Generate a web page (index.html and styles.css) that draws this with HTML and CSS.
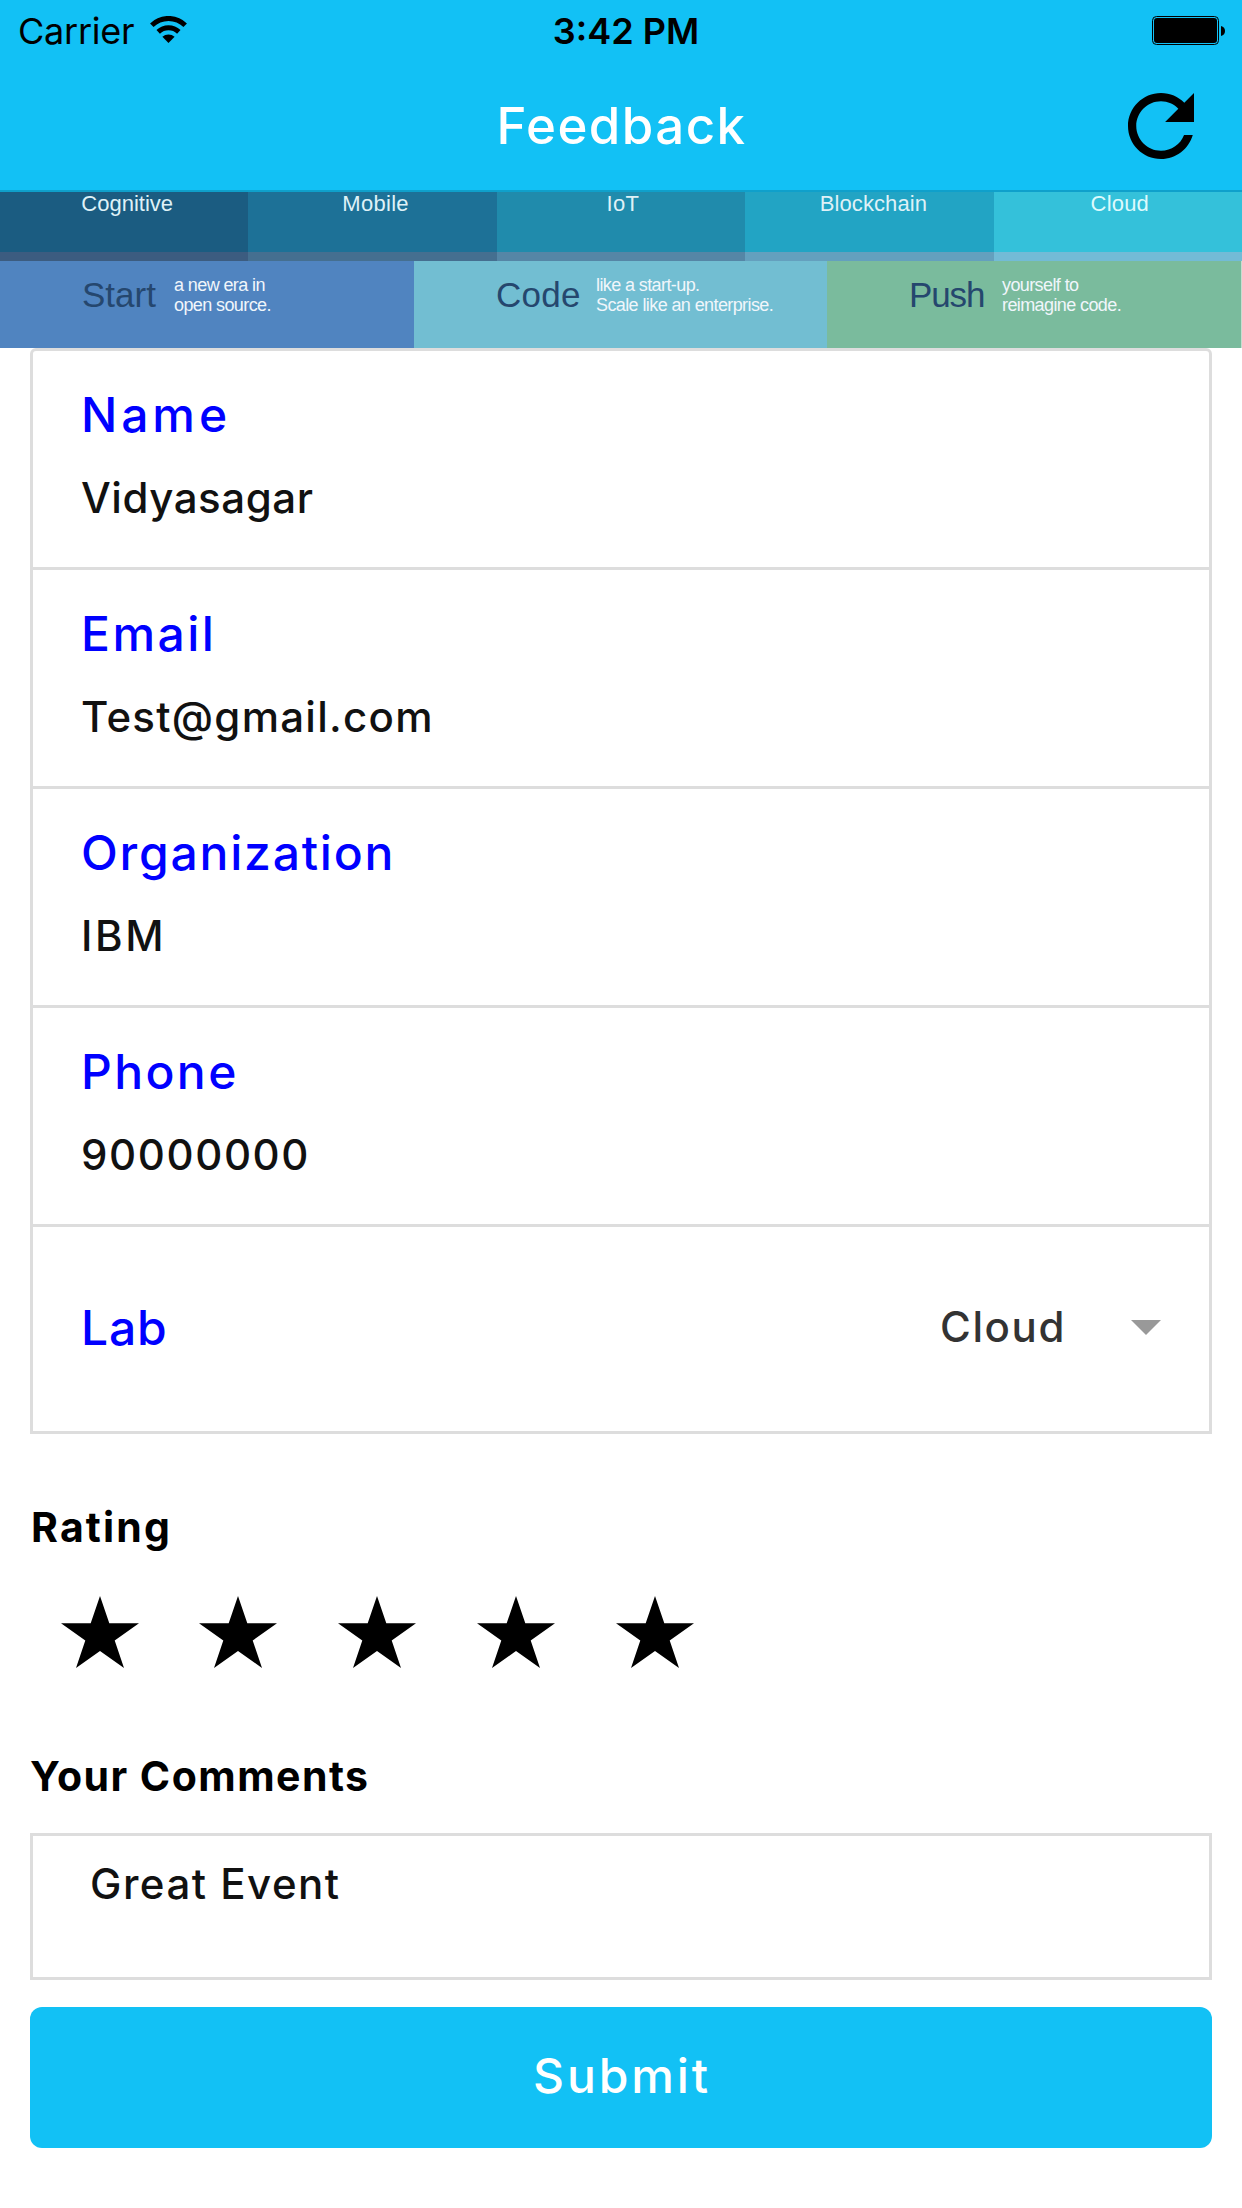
FILE: index.html
```html
<!DOCTYPE html>
<html lang="en">
<head>
<meta charset="utf-8">
<title>Feedback</title>
<link rel="stylesheet" href="styles.css">
</head>
<body>
<header class="header">
  <div class="status">
    <div class="carrier">
      <span class="carrier-name">Carrier</span>
      <svg class="wifi" viewBox="0 0 37 28" width="37" height="28">
        <path fill="none" stroke="#000" stroke-width="5" d="M1.8 9.2a24 24 0 0 1 33.4 0M8.2 15.9a15 15 0 0 1 20.6 0"/>
        <path d="M12.4 20.8a9 9 0 0 1 12.2 0L18.5 27z"/>
      </svg>
    </div>
    <span class="time">3:42 PM</span>
    <svg class="battery" viewBox="0 0 73 29" width="73" height="29">
      <rect x=".5" y=".5" width="66" height="28" rx="4" fill="none" stroke="#000"/>
      <rect x="2" y="2" width="63" height="25" rx="3"/>
      <path d="M69 10q4 1 4 5t-4 5z"/>
    </svg>
  </div>
  <div class="navbar">
    <h1 class="title">Feedback</h1>
    <svg class="refresh" viewBox="80 80 352 352" width="66" height="66">
      <path d="M256 388c-72.6 0-132-59.4-132-132s59.4-132 132-132c36.3 0 69.3 15.4 92.4 39.6L278 234h154V80l-51.7 51.7C348.4 99.8 304.4 80 256 80c-96.8 0-176 79.2-176 176s78.1 176 176 176c81 0 148.3-54.1 169.4-128h-46.5c-18.8 49.6-67.2 84-122.9 84z"/>
    </svg>
  </div>
</header>

<section class="banner">
  <div class="topics">
    <div class="topic cognitive">Cognitive</div>
    <div class="topic mobile">Mobile</div>
    <div class="topic iot">IoT</div>
    <div class="topic blockchain">Blockchain</div>
    <div class="topic cloud">Cloud</div>
  </div>
  <div class="slogans">
    <div class="slogan start"><span class="verb">Start</span><p class="pitch">a new era in<br>open source.</p></div>
    <div class="slogan code"><span class="verb">Code</span><p class="pitch">like a start-up.<br>Scale like an enterprise.</p></div>
    <div class="slogan push"><span class="verb">Push</span><p class="pitch">yourself to<br>reimagine code.</p></div>
  </div>
</section>

<main class="form">
  <div class="card">
    <div class="field"><div class="label name">Name</div><div class="value person">Vidyasagar</div></div>
    <div class="field"><div class="label email">Email</div><div class="value address">Test@gmail.com</div></div>
    <div class="field"><div class="label organization">Organization</div><div class="value company">IBM</div></div>
    <div class="field"><div class="label phone">Phone</div><div class="value number">90000000</div></div>
    <div class="field select">
      <div class="label lab">Lab</div>
      <div class="choice">Cloud</div>
      <div class="caret"></div>
    </div>
  </div>

  <h2 class="heading rating">Rating</h2>
  <div class="stars">
    <svg class="star" viewBox="0 0 78 72"><path d="M39 0l9.3 27.3H78L53.7 44.5 63 72 39 55 15 72l9.3-27.5L0 27.3h29.7z"/></svg>
    <svg class="star" viewBox="0 0 78 72"><path d="M39 0l9.3 27.3H78L53.7 44.5 63 72 39 55 15 72l9.3-27.5L0 27.3h29.7z"/></svg>
    <svg class="star" viewBox="0 0 78 72"><path d="M39 0l9.3 27.3H78L53.7 44.5 63 72 39 55 15 72l9.3-27.5L0 27.3h29.7z"/></svg>
    <svg class="star" viewBox="0 0 78 72"><path d="M39 0l9.3 27.3H78L53.7 44.5 63 72 39 55 15 72l9.3-27.5L0 27.3h29.7z"/></svg>
    <svg class="star" viewBox="0 0 78 72"><path d="M39 0l9.3 27.3H78L53.7 44.5 63 72 39 55 15 72l9.3-27.5L0 27.3h29.7z"/></svg>
  </div>

  <h2 class="heading comments-title">Your Comments</h2>
  <div class="comments">Great Event</div>
  <button class="submit">Submit</button>
</main>
</body>
</html>
```
FILE: styles.css
```css
* { box-sizing: border-box; }
body { margin: 0; background: #fff; color: #000; font-family: Inter, sans-serif; }
h1, h2, p { margin: 0; }
svg { display: block; flex: none; }

.header { height: 192px; background: #12c1f5; border-bottom: 2px solid #0fa0cb; }
.status {
  display: grid;
  grid-template-columns: 1fr auto 1fr;
  height: 60px;
  padding: 0 17px 0 18px;
  font-size: 36px;
  line-height: 62px;
}
.carrier { display: flex; }
.carrier-name { width: 132px; letter-spacing: -.24px; }
.wifi { margin-top: 16px; }
.time { font-weight: 600; padding-left: 9px; }
.battery { justify-self: end; margin-top: 16px; }
.navbar {
  display: grid;
  grid-template-columns: 1fr auto 1fr;
  height: 130px;
  padding: 0 48px;
}
.title {
  grid-column: 2;
  color: #fff;
  font-size: 51px;
  font-weight: 500;
  line-height: 131px;
  letter-spacing: 1.45px;
  padding-left: 1px;
}
.refresh { justify-self: end; margin-top: 33px; }

.banner { font-family: "Liberation Sans", sans-serif; }
.topics { display: grid; grid-template-columns: repeat(5, 1fr); height: 69px; }
.topic {
  padding-left: 6px;
  border-bottom: 9px solid;
  color: #dff1f7;
  font-size: 22px;
  line-height: 23px;
  text-align: center;
}
.cognitive { background: #1b5c81; border-color: #3c5c80; }
.mobile { background: #1d7197; border-color: #456f90; letter-spacing: .29px; }
.iot { background: #208bac; border-color: #5586a6; letter-spacing: .33px; padding-left: 4px; }
.blockchain { background: #22a4c4; border-color: #64a0be; letter-spacing: .09px; padding-left: 8px; }
.cloud { background: #34c1da; border-color: #73bbd6; letter-spacing: .19px; color: #ddfafd; padding-left: 4px; }

.slogans { display: grid; grid-template-columns: 414px 413px 414px 1px; height: 87px; background: #c8dccf; }
.slogan { display: flex; padding: 14px 0 0 82px; }
.start { background: #5084c0; }
.code { background: #72bed2; }
.push { background: #7abb9d; }
.verb { width: 92px; color: #25476e; font-size: 35px; line-height: 27px; margin-top: 6px; }
.code .verb { width: 100px; letter-spacing: .26px; }
.push .verb { width: 93px; letter-spacing: -1.1px; }
.pitch { color: #f0f6fb; font-size: 18px; line-height: 20px; letter-spacing: -.6px; }

.form { padding: 0 30px; }
.card { border: 3px solid #ddd; border-radius: 6px 6px 0 0; }
.field { height: 219px; padding: 35px 48px 0; border-bottom: 3px solid #ddd; }
.label { color: #00f; font-size: 48px; font-weight: 500; line-height: 57px; }
.name { letter-spacing: 3.9px; }
.email { letter-spacing: 2.45px; }
.organization { letter-spacing: 1.78px; }
.phone { letter-spacing: 2.4px; }
.lab { letter-spacing: .8px; }
.value { margin-top: 30px; color: #111; font-size: 42px; font-weight: 500; line-height: 50px; }
.person { letter-spacing: .55px; }
.address { letter-spacing: 1.27px; }
.company { letter-spacing: 2.6px; }
.number { letter-spacing: 1.6px; }
.select { display: flex; align-items: center; height: 204px; padding-top: 0; padding-bottom: 4px; border-bottom: 0; }
.choice { margin-left: auto; color: #333; font-size: 42px; font-weight: 500; line-height: 50px; letter-spacing: 1.6px; }
.caret {
  margin-left: 65px;
  border: 15px solid transparent;
  border-top-color: #999;
  border-bottom: 0;
}

.heading { font-size: 41px; font-weight: 700; line-height: 50px; }
.rating { margin-top: 68px; letter-spacing: 2.16px; padding-left: 1px; }
.stars { display: flex; gap: 60.8px; margin-top: 44px; padding-left: 30.5px; }
.star { width: 78px; height: 72px; }
.comments-title { margin-top: 83px; letter-spacing: 1.46px; }
.comments {
  height: 147px;
  margin-top: 32px;
  padding: 23px 57px;
  border: 3px solid #ddd;
  color: #111;
  font-size: 42px;
  font-weight: 500;
  line-height: 50px;
  letter-spacing: 1.5px;
}
.submit {
  display: block;
  width: 100%;
  height: 141px;
  margin-top: 27px;
  padding: 0 0 5px 2px;
  border: 0;
  border-radius: 12px;
  background: #12c1f5;
  color: #fff;
  font: 500 48px Inter, sans-serif;
  letter-spacing: 2.9px;
}
```
